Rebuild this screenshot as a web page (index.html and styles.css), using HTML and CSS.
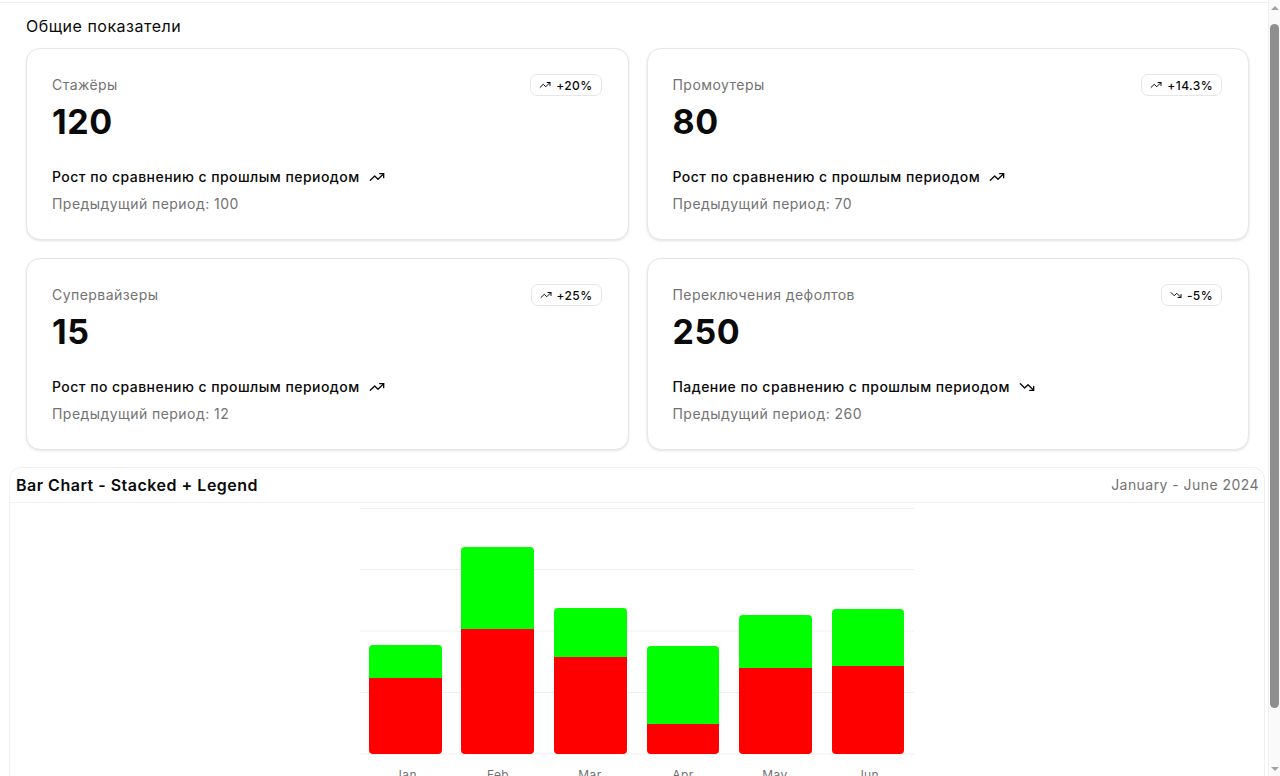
FILE: index.html
```html
<!DOCTYPE html>
<html lang="ru">
<head>
<meta charset="utf-8">
<title>Общие показатели</title>
<link rel="stylesheet" href="styles.css">
</head>
<body>
<div class="topbar"></div>
<main class="page">
  <section class="overview">
    <h2 class="section-title">Общие показатели</h2>
    <div class="cards">
      <div class="card">
        <div class="card-head">
          <div class="card-label">Стажёры</div>
          <span class="badge"><svg class="ico-s" viewBox="0 0 24 24"><polyline points="22 7 13.5 15.5 8.5 10.5 2 17"/><polyline points="16 7 22 7 22 13"/></svg>+20%</span>
        </div>
        <div class="card-value">120</div>
        <div class="card-foot">
          <div class="trend">Рост по сравнению с прошлым периодом <svg class="ico" viewBox="0 0 24 24"><polyline points="22 7 13.5 15.5 8.5 10.5 2 17"/><polyline points="16 7 22 7 22 13"/></svg></div>
          <div class="prev">Предыдущий период: 100</div>
        </div>
      </div>
      <div class="card">
        <div class="card-head">
          <div class="card-label">Промоутеры</div>
          <span class="badge"><svg class="ico-s" viewBox="0 0 24 24"><polyline points="22 7 13.5 15.5 8.5 10.5 2 17"/><polyline points="16 7 22 7 22 13"/></svg>+14.3%</span>
        </div>
        <div class="card-value">80</div>
        <div class="card-foot">
          <div class="trend">Рост по сравнению с прошлым периодом <svg class="ico" viewBox="0 0 24 24"><polyline points="22 7 13.5 15.5 8.5 10.5 2 17"/><polyline points="16 7 22 7 22 13"/></svg></div>
          <div class="prev">Предыдущий период: 70</div>
        </div>
      </div>
      <div class="card">
        <div class="card-head">
          <div class="card-label">Супервайзеры</div>
          <span class="badge"><svg class="ico-s" viewBox="0 0 24 24"><polyline points="22 7 13.5 15.5 8.5 10.5 2 17"/><polyline points="16 7 22 7 22 13"/></svg>+25%</span>
        </div>
        <div class="card-value">15</div>
        <div class="card-foot">
          <div class="trend">Рост по сравнению с прошлым периодом <svg class="ico" viewBox="0 0 24 24"><polyline points="22 7 13.5 15.5 8.5 10.5 2 17"/><polyline points="16 7 22 7 22 13"/></svg></div>
          <div class="prev">Предыдущий период: 12</div>
        </div>
      </div>
      <div class="card">
        <div class="card-head">
          <div class="card-label">Переключения дефолтов</div>
          <span class="badge"><svg class="ico-s" viewBox="0 0 24 24"><polyline points="22 17 13.5 8.5 8.5 13.5 2 7"/><polyline points="16 17 22 17 22 11"/></svg>-5%</span>
        </div>
        <div class="card-value">250</div>
        <div class="card-foot">
          <div class="trend">Падение по сравнению с прошлым периодом <svg class="ico" viewBox="0 0 24 24"><polyline points="22 17 13.5 8.5 8.5 13.5 2 7"/><polyline points="16 17 22 17 22 11"/></svg></div>
          <div class="prev">Предыдущий период: 260</div>
        </div>
      </div>
    </div>
  </section>

  <section class="chart-card">
    <div class="chart-head">
      <h3 class="chart-title">Bar Chart - Stacked + Legend</h3>
      <span class="chart-range">January - June 2024</span>
    </div>
    <div class="chart-body">
      <svg class="chart" viewBox="0 0 554 280" width="554" height="280">
        <g class="grid">
          <line x1="0" x2="554" y1="0.5" y2="0.5"/>
          <line x1="0" x2="554" y1="61.5" y2="61.5"/>
          <line x1="0" x2="554" y1="123" y2="123"/>
          <line x1="0" x2="554" y1="184.5" y2="184.5"/>
          <line x1="0" x2="554" y1="246" y2="246"/>
        </g>
        <g class="bars-desktop">
          <path d="M9 170 H82 V242 a4 4 0 0 1 -4 4 H13 a4 4 0 0 1 -4 -4 Z"/>
          <path d="M101 121 H174 V242 a4 4 0 0 1 -4 4 H105 a4 4 0 0 1 -4 -4 Z"/>
          <path d="M194 149 H267 V242 a4 4 0 0 1 -4 4 H198 a4 4 0 0 1 -4 -4 Z"/>
          <path d="M287 216 H359 V242 a4 4 0 0 1 -4 4 H291 a4 4 0 0 1 -4 -4 Z"/>
          <path d="M379 160 H452 V242 a4 4 0 0 1 -4 4 H383 a4 4 0 0 1 -4 -4 Z"/>
          <path d="M472 158 H544 V242 a4 4 0 0 1 -4 4 H476 a4 4 0 0 1 -4 -4 Z"/>
        </g>
        <g class="bars-mobile">
          <path d="M9 170 V141 a4 4 0 0 1 4 -4 H78 a4 4 0 0 1 4 4 V170 Z"/>
          <path d="M101 121 V43 a4 4 0 0 1 4 -4 H170 a4 4 0 0 1 4 4 V121 Z"/>
          <path d="M194 149 V104 a4 4 0 0 1 4 -4 H263 a4 4 0 0 1 4 4 V149 Z"/>
          <path d="M287 216 V142 a4 4 0 0 1 4 -4 H355 a4 4 0 0 1 4 4 V216 Z"/>
          <path d="M379 160 V111 a4 4 0 0 1 4 -4 H448 a4 4 0 0 1 4 4 V160 Z"/>
          <path d="M472 158 V105 a4 4 0 0 1 4 -4 H540 a4 4 0 0 1 4 4 V158 Z"/>
        </g>
        <g class="ticks">
          <text x="46" y="271">Jan</text>
          <text x="138" y="271">Feb</text>
          <text x="230" y="271">Mar</text>
          <text x="323" y="271">Apr</text>
          <text x="415" y="271">May</text>
          <text x="508" y="271">Jun</text>
        </g>
      </svg>
      <div class="legend">
        <span class="legend-item"><i class="dot dot-desktop"></i>Desktop</span>
        <span class="legend-item"><i class="dot dot-mobile"></i>Mobile</span>
      </div>
    </div>
  </section>
</main>
<div class="scrollbar" aria-hidden="true">
  <span class="sb-arrow sb-up"></span>
  <span class="sb-thumb"></span>
  <span class="sb-arrow sb-down"></span>
</div>
</body>
</html>
```
FILE: styles.css
```css
* { box-sizing: border-box; }
html, body { margin: 0; padding: 0; }
body {
  font-family: Inter, "Noto Sans", "Liberation Sans", sans-serif;
  color: #0a0a0a;
  background: #fff;
  padding-right: 12px;
}
.topbar {
  height: 3px;
  border-bottom: 1px solid #efefef;
}
.page { padding-bottom: 10px; }
.overview { padding: 0 19px 0 26px; }
.section-title {
  margin: 0;
  padding-top: 11px;
  font-size: 16px;
  line-height: 24px;
  font-weight: 400;
  letter-spacing: 0.5px;
  height: 45px;
}
.cards {
  display: grid;
  grid-template-columns: 1fr 1fr;
  gap: 18px;
}
.card {
  border: 1px solid #e6e6e6;
  border-radius: 14px;
  box-shadow: 0 1px 3px rgba(0,0,0,0.08), 0 1px 2px rgba(0,0,0,0.04);
  padding: 25px 26px 26px 25px;
  height: 192px;
  background: #fff;
}
.card-head {
  display: flex;
  justify-content: space-between;
  align-items: center;
}
.card-label {
  font-size: 14px;
  line-height: 20px;
  color: #737373;
  letter-spacing: 0.45px;
}
.badge {
  display: inline-flex;
  align-items: center;
  gap: 5px;
  height: 22px;
  padding: 0 8px;
  border: 1px solid #e6e6e6;
  border-radius: 7px;
  font-size: 12px;
  font-weight: 500;
  letter-spacing: 0.4px;
  color: #0a0a0a;
}
.ico-s {
  width: 12px; height: 12px;
  fill: none; stroke: #0a0a0a; stroke-width: 2; stroke-linecap: round; stroke-linejoin: round;
}
.card-value {
  margin-top: 6px;
  font-size: 34px;
  line-height: 40px;
  font-weight: 700;
  letter-spacing: 0.6px;
}
.card-foot { margin-top: 25px; }
.trend {
  display: flex;
  align-items: center;
  gap: 9px;
  font-size: 14px;
  line-height: 20px;
  font-weight: 500;
  letter-spacing: 0.45px;
}
.ico {
  width: 16px; height: 16px;
  fill: none; stroke: #0a0a0a; stroke-width: 2; stroke-linecap: round; stroke-linejoin: round;
}
.prev {
  margin-top: 7px;
  font-size: 14px;
  line-height: 20px;
  color: #737373;
  letter-spacing: 0.45px;
}
.chart-card {
  margin: 17px 3px 0 9px;
  border: 1px solid #f0f0f0;
  border-radius: 12px;
  background: #fff;
}
.chart-head {
  display: flex;
  justify-content: space-between;
  align-items: center;
  padding: 5px 5px 5px 6px;
  border-bottom: 1px solid #f3f3f3;
}
.chart-title {
  margin: 0;
  font-size: 16px;
  line-height: 24px;
  font-weight: 600;
  letter-spacing: 0.5px;
}
.chart-range {
  font-size: 14px;
  line-height: 20px;
  color: #737373;
  letter-spacing: 0.45px;
}
.chart-body {
  padding-top: 5px;
  display: flex;
  flex-direction: column;
  align-items: center;
}
.chart { display: block; overflow: visible; }
.grid line { stroke: #efefef; stroke-width: 1; }
.bars-desktop path { fill: #ff0000; }
.bars-mobile path { fill: #00ff00; }
.ticks text {
  font-family: Inter, "Noto Sans", sans-serif;
  font-size: 12px;
  fill: #737373;
  text-anchor: middle;
  letter-spacing: 0.4px;
}
.legend {
  display: flex;
  gap: 16px;
  padding: 8px 0 20px;
  font-size: 12px;
  color: #0a0a0a;
}
.legend-item { display: inline-flex; align-items: center; gap: 6px; }
.dot { width: 8px; height: 8px; border-radius: 2px; display: inline-block; }
.dot-desktop { background: #ff0000; }
.dot-mobile { background: #00ff00; }

/* emulated browser scrollbar */
.scrollbar {
  position: fixed;
  top: 0;
  right: 0;
  bottom: 0;
  width: 12px;
  background: #fafafa;
  border-left: 1px solid #f0f0f0;
  display: flex;
  flex-direction: column;
  align-items: center;
  padding: 6px 0 5px;
}
.sb-arrow {
  width: 0; height: 0;
  border-left: 4px solid transparent;
  border-right: 4px solid transparent;
}
.sb-up { border-bottom: 4px solid #a3a3a3; }
.sb-down { border-top: 4px solid #a3a3a3; margin-top: auto; }
.sb-thumb {
  margin-top: 14px;
  width: 9px;
  height: 684px;
  background: #8e8e8e;
  border-radius: 5px;
}
```
